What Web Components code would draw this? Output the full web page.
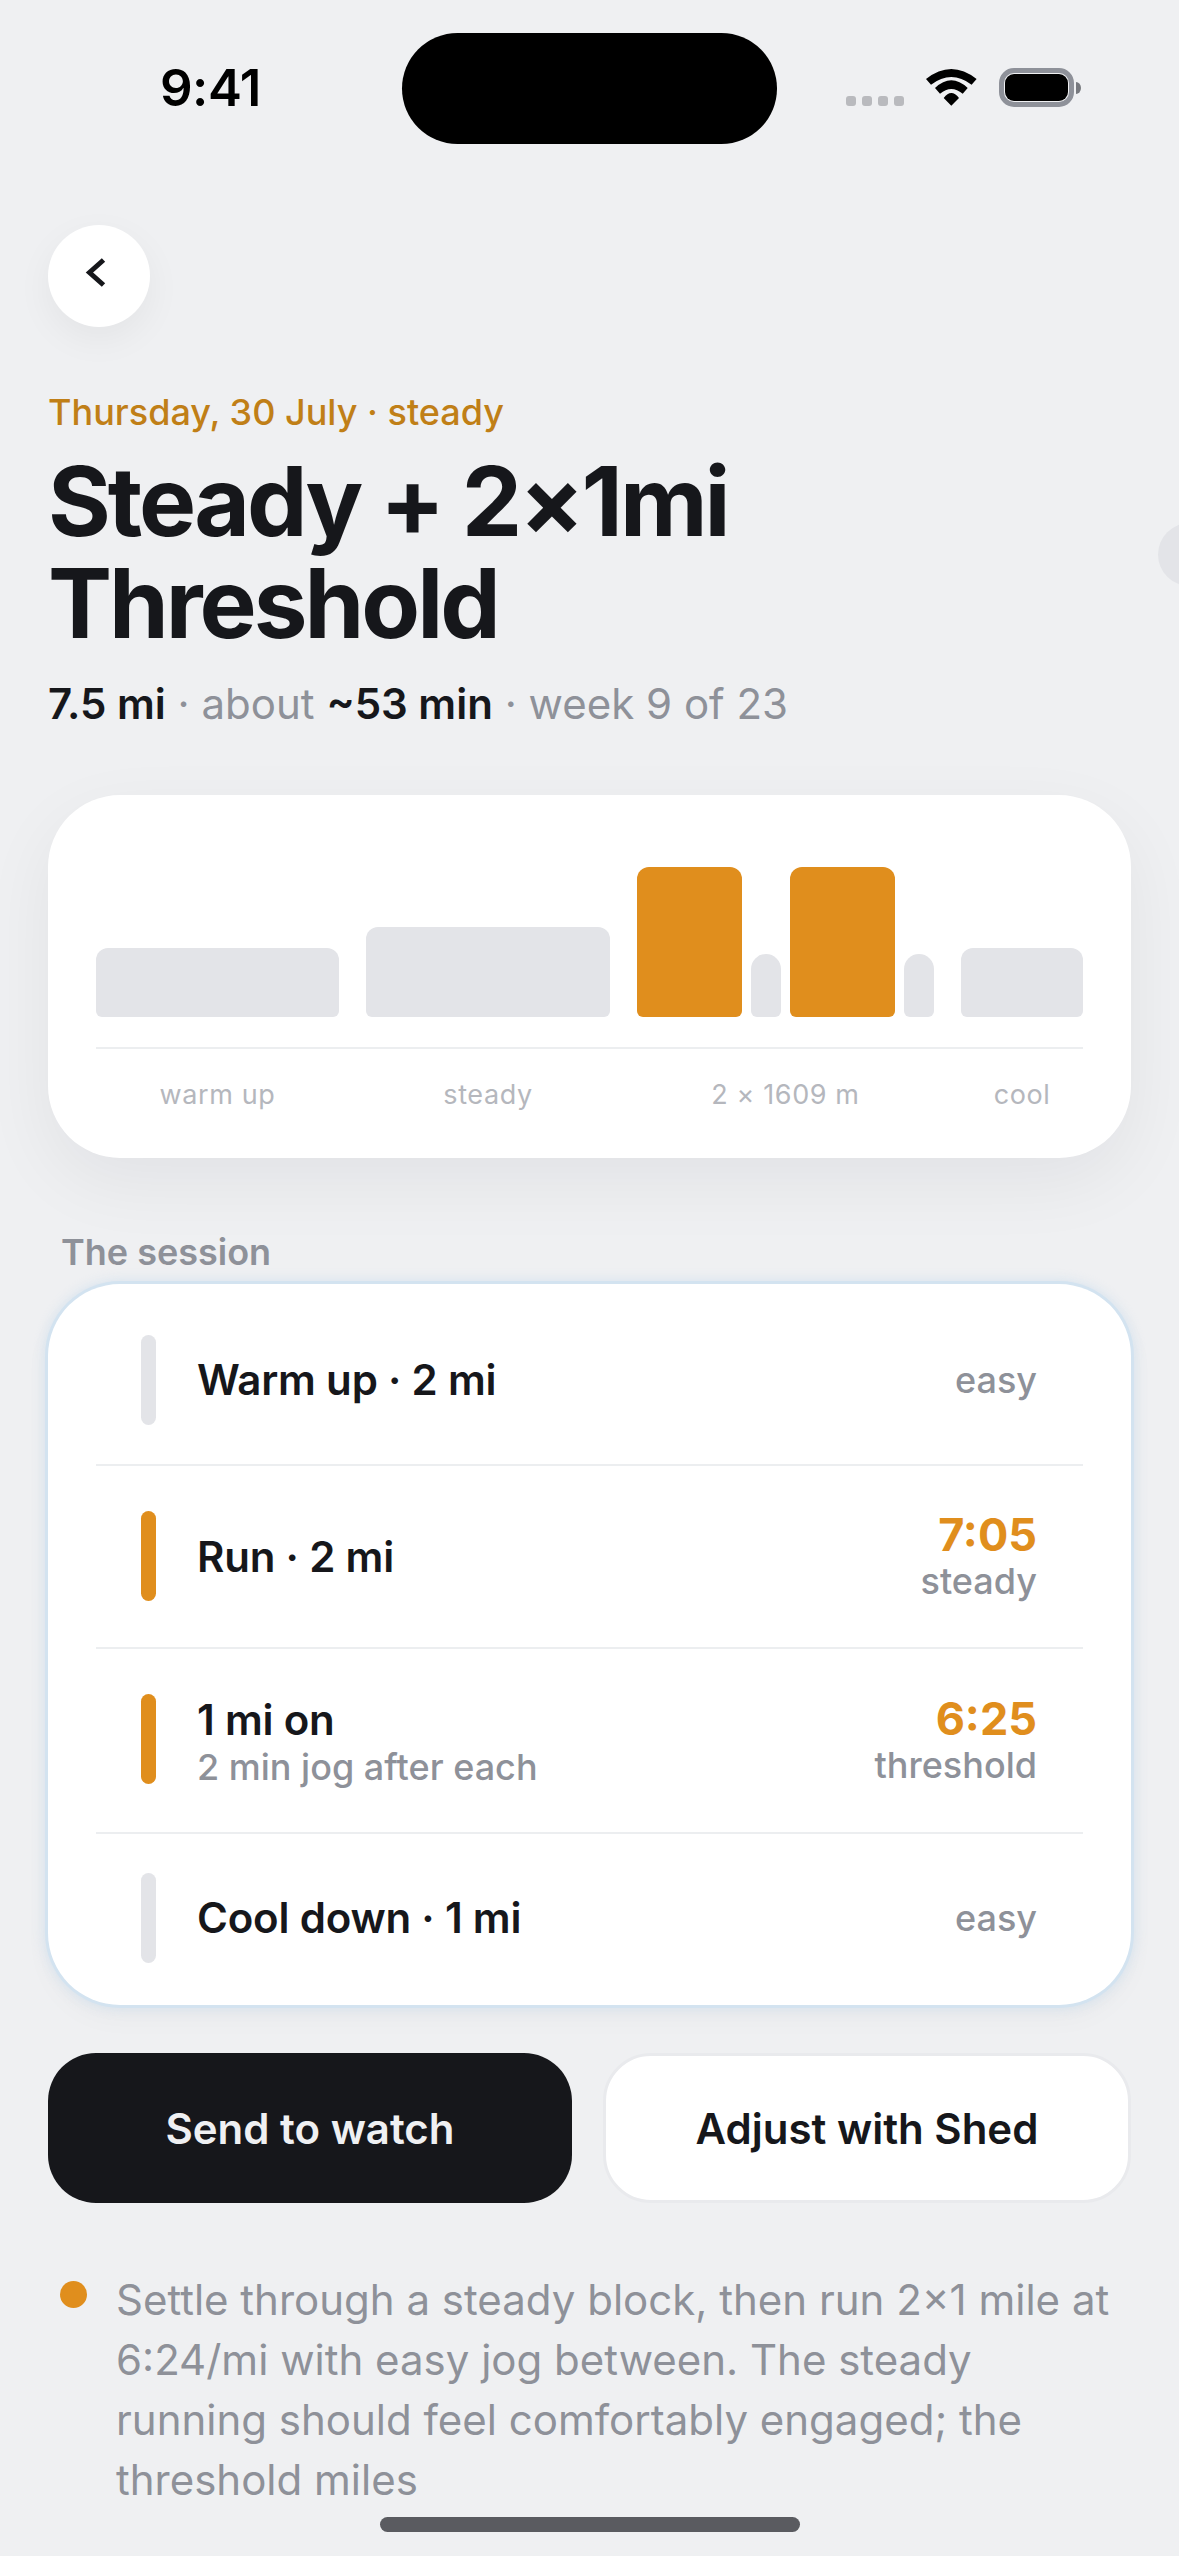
<!DOCTYPE html>
<html lang="en"><head><meta charset="utf-8"><title>Session</title>
<style>
html,body{margin:0;padding:0;background:#eff0f2}
body{font-family:Inter,"Noto Sans",sans-serif;color:#16171b;-webkit-font-smoothing:antialiased}
</style></head><body>
<app-screen>
  <status-bar></status-bar>
  <back-button></back-button>
  <workout-header></workout-header>
  <interval-chart></interval-chart>
  <section-label>The session</section-label>
  <session-card>
    <session-row top="51" bottom="39" title="Warm up · 2 mi" note="easy"></session-row>
    <session-row accent top="45" bottom="44" title="Run · 2 mi" pace="7:05" note="steady"></session-row>
    <session-row accent top="45" bottom="44" title="1 mi on" sub="2 min jog after each" pace="6:25" note="threshold"></session-row>
    <session-row last top="39" bottom="51" title="Cool down · 1 mi" note="easy"></session-row>
  </session-card>
  <action-buttons></action-buttons>
  <coach-note>Settle through a steady block, then run 2×1 mile at 6:24/mi with easy jog between. The steady running should feel comfortably engaged; the threshold miles</coach-note>
</app-screen>
<script>
function def(name, css, html, extra){
  customElements.define(name, class extends HTMLElement{
    connectedCallback(){
      if(this.shadowRoot) return;
      const r=this.attachShadow({mode:'open'});
      r.innerHTML='<style>'+css+'</style>'+(typeof html==='function'?html(this):html);
    }
  });
}
def('app-screen',`
:host{display:block;position:relative;width:1179px;height:2556px;overflow:hidden;background:#eff0f2;font-family:Inter,"Noto Sans",sans-serif;color:#16171b}
.peek{position:absolute;left:1158px;top:523px;width:63px;height:63px;border-radius:50%;background:#e3e4e8}
.home{position:absolute;left:380px;top:2517px;width:420px;height:15px;border-radius:8px;background:#5a5b60}
`,`<slot></slot><div class="peek"></div><div class="home"></div>`);
def('status-bar',`
:host{display:grid;grid-template-columns:402px 375px 1fr;padding-top:33px;height:111px}
.time{font-size:51px;font-weight:600;line-height:111px;padding-left:160px;letter-spacing:-.5px;position:relative;top:-1px;color:#000}
.island{background:#000;border-radius:56px;height:111px}
.icons{display:flex;align-items:flex-start;padding:35px 0 0 69px}
.dots{display:flex;gap:6px;margin:28px 0 0 0}
.dots i{display:block;width:10px;height:10px;border-radius:3px;background:#b9babe}
.wifi{display:block;margin:1px 0 0 22px;width:51px;height:37px}
.batt{position:relative;margin-left:22px;width:75px;height:39px;box-sizing:border-box;border:5px solid #8e9199;border-radius:15px;padding:1px}
.batt b{display:block;height:100%;background:#000;border-radius:9px}
.nub{width:5px;height:12px;margin:14px 0 0 2px;background:#77797e;clip-path:ellipse(100% 50% at 0 50%)}
`,`<div class="time">9:41</div><div class="island"></div><div class="icons"><div class="dots"><i></i><i></i><i></i><i></i></div>
<svg class="wifi" viewBox="0 0 51 37"><path d="M0 10Q25.3-10 50.6 10L45.6 15.7Q25.3.3 5 15.7Z M9 19Q25.3 3.6 41.7 19L36.7 24.7Q25.3 15.3 14 24.7Z M17.7 29Q25.3 19 33 29L25.3 36.7Z" fill="#000"/></svg>
<div class="batt"><b></b></div><div class="nub"></div></div>`);
def('back-button',`
:host{display:flex;width:102px;height:102px;margin:81px 0 0 48px;border-radius:50%;background:#fff;box-shadow:0 12px 36px rgba(22,23,27,.05)}
svg{display:block;width:102px;height:102px}
`,`<svg viewBox="0 0 102 102"><path d="M55.5 35 41.5 47.5 55.5 60" fill="none" stroke="#16171b" stroke-width="5"/></svg>`);
def('workout-header',`
:host{display:block;padding:0 48px;margin-top:61px}
.eyebrow{font-size:36px;font-weight:500;line-height:48px;color:#c07f17}
h1{margin:14px 0 0;font-size:96px;font-weight:700;line-height:102px;letter-spacing:-3px;color:#16171b;width:800px}
.meta{margin-top:22px;font-size:42px;font-weight:400;line-height:56px;color:#8e9199}
.meta b{font-weight:600;color:#16171b}
`,`<div class="eyebrow">Thursday, 30 July · steady</div><h1>Steady + 2×1mi<br>Threshold</h1>
<div class="meta"><b>7.5 mi</b> · about <b>~53 min</b> · week 9 of 23</div>`);
def('interval-chart',`
:host{display:block;box-sizing:border-box;margin:63px 48px 0;height:363px;padding:72px 48px 0;background:#fff;border-radius:72px;box-shadow:0 24px 72px rgba(22,23,27,.06)}
.bars{display:flex;align-items:flex-end;height:150px;padding-bottom:30px;border-bottom:2px solid #eceef0}
.bars i{display:block;background:#e3e4e8;border-radius:12px 12px 6px 6px}
.o{background:#e08e1d!important}
.s{border-radius:15px 15px 6px 6px!important}
.labels{display:flex;margin-top:30px;font-size:27px;line-height:32px;color:#b5b7bd;letter-spacing:.6px;text-align:center}
`,`<div class="bars">
<i style="width:243px;height:69px;margin-right:27px"></i>
<i style="width:244px;height:90px;margin-right:27px"></i>
<i class="o" style="width:105px;height:150px;margin-right:9px"></i>
<i class="s" style="width:30px;height:63px;margin-right:9px"></i>
<i class="o" style="width:105px;height:150px;margin-right:9px"></i>
<i class="s" style="width:30px;height:63px;margin-right:27px"></i>
<i style="width:122px;height:69px"></i></div>
<div class="labels"><span style="width:243px;margin-right:27px">warm up</span><span style="width:244px;margin-right:27px">steady</span><span style="width:297px;margin-right:27px">2 × 1609 m</span><span style="width:122px">cool</span></div>`);
def('section-label',`
:host{display:block;margin:72px 0 0 61px;font-size:36px;font-weight:600;line-height:44px;color:#8e9199}
`,`<slot></slot>`);
def('session-card',`
:host{display:block;box-sizing:border-box;margin:10px 48px 0;height:721px;padding:0 48px;background:#fff;border-radius:72px;box-shadow:0 0 0 3px #d3e3f0,0 0 12px 4px rgba(190,215,238,.45),0 12px 30px rgba(22,23,27,.03)}
`,`<slot></slot>`);
def('session-row',`
:host{display:flex;align-items:stretch;border-bottom:2px solid #eceef0}
:host([last]){border-bottom:0}
.bar{flex:none;width:15px;height:90px;margin-left:45px;border-radius:8px;background:#e3e4e8}
:host([accent]) .bar{background:#e08e1d}
.main{flex:1;margin-left:41px;display:flex;flex-direction:column;justify-content:center}
.title{font-size:42px;font-weight:600;line-height:52px;letter-spacing:-.2px;color:#16171b}
.sub{font-size:36px;font-weight:500;line-height:42px;color:#8e9199}
.side{display:flex;flex-direction:column;justify-content:center;align-items:flex-end;padding-right:46px}
.pace{font-size:45px;font-weight:700;line-height:48px;color:#e08e1d}
.note{font-size:36px;font-weight:500;line-height:44px;color:#8e9199}
`,h=>{
  const a=n=>h.getAttribute(n);
  h.style.paddingTop=a('top')+'px';h.style.paddingBottom=a('bottom')+'px';
  return `<div class="bar"></div><div class="main"><div class="title">${a('title')}</div>${a('sub')?`<div class="sub">${a('sub')}</div>`:''}</div>
  <div class="side">${a('pace')?`<div class="pace">${a('pace')}</div>`:''}<div class="note">${a('note')}</div></div>`;
});
def('action-buttons',`
:host{display:grid;grid-template-columns:524px 528px;gap:31px;margin:48px 48px 0}
.b{box-sizing:border-box;height:150px;border-radius:48px;display:flex;align-items:center;justify-content:center;font-size:42px;font-weight:600}
.p{background:#16171b;color:#eff0f2}
.s{background:#fff;color:#16171b;border:3px solid #e9eaed}
`,`<div class="b p">Send to watch</div><div class="b s">Adjust with Shed</div>`);
def('coach-note',`
:host{display:flex;margin:67px 48px 0 12px;padding-left:48px;gap:29px;font-size:42px;line-height:60px;color:#8e9199;}
.dot{flex:none;width:27px;height:27px;border-radius:50%;background:#e08e1d;margin-top:11px}
.t{width:1010px}
`,`<div class="dot"></div><div class="t"><slot></slot></div>`);
</script>
</body></html>
